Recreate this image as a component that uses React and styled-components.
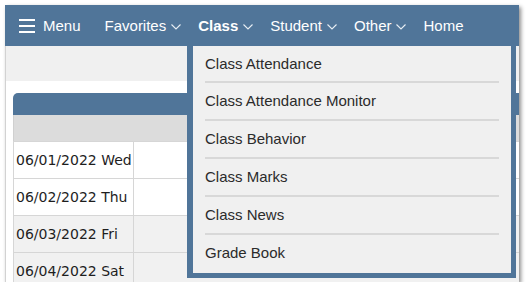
import React from "react";
import styled, { createGlobalStyle } from "styled-components";

const Global = createGlobalStyle`
  html, body { margin: 0; padding: 0; background: #ffffff; }
  body { font-family: "Liberation Sans", Arial, sans-serif; }
`;

const Frame = styled.div`
  position: relative;
  margin: 5px 0 0 5px;
  width: 514px;
  height: 277px;
  overflow: hidden;
  background: #ffffff;
  box-shadow: 2px 2px 4px rgba(0, 0, 0, 0.45);
  display: flex;
  flex-direction: column;
`;

const Nav = styled.nav`
  height: 41px;
  flex: none;
  background: #507599;
  display: flex;
  align-items: center;
  padding-left: 14px;
  gap: 17px;
  color: #ffffff;
  font-size: 15px;
`;

const MenuButton = styled.div`
  display: flex;
  align-items: center;
  gap: 8px;
  margin-right: 7px;
`;

const NavItem = styled.div`
  display: flex;
  align-items: center;
  gap: 5px;
  font-weight: ${(p) => (p.$active ? 700 : 400)};
`;

const Body = styled.div`
  flex: 1;
  border-left: 1px solid #d2d2d2;
  display: flex;
  flex-direction: column;
`;

const Band = styled.div`
  height: 35px;
  flex: none;
  background: #f0f0f0;
`;

const Work = styled.div`
  flex: 1;
  padding: 12px 0 0 7px;
`;

const Panel = styled.div`
  width: 520px;
  border-radius: 5px 5px 0 0;
  overflow: hidden;
`;

const PanelHead = styled.div`
  height: 22px;
  background: #507599;
`;

const HeadRow = styled.div`
  height: 26px;
  background: #dcdcdc;
  border-left: 1px solid #d0d0d0;
`;

const Row = styled.div`
  display: flex;
  height: 36px;
  border-top: 1px solid #d6d6d6;
  border-left: 1px solid #d6d6d6;
  background: ${(p) => (p.$shade ? "#f1f1f1" : "#ffffff")};
`;

const DateCell = styled.div`
  width: 117px;
  padding-left: 2px;
  border-right: 1px solid #d6d6d6;
  display: flex;
  align-items: center;
  font-family: "DejaVu Sans", Verdana, sans-serif;
  font-size: 14px;
  color: #1e1e1e;
  white-space: nowrap;
`;

const Dropdown = styled.ul`
  position: absolute;
  left: 182px;
  top: 41px;
  width: 318px;
  margin: 0;
  padding: 0 0 2px;
  list-style: none;
  background: #f0f0f0;
  border-style: solid;
  border-color: #507599;
  border-width: 0 5px 5px 6px;
`;

const DropItem = styled.li`
  height: 36px;
  display: flex;
  align-items: center;
  padding-left: 12px;
  padding-bottom: 1px;
  box-sizing: border-box;
  font-size: 15px;
  color: #2b2b2b;
  &:first-child {
    height: 35px;
  }
`;

const Sep = styled.li`
  height: 2px;
  margin: 0 12px;
  background: #d8d8d8;
`;

const Chevron = () => (
  <svg width="10" height="6" viewBox="0 0 10 6" style={{ marginTop: 2 }}>
    <path d="M0.5 0.5 L5 5 L9.5 0.5" fill="none" stroke="#e8eef4" strokeWidth="1.1" />
  </svg>
);

const Hamburger = () => (
  <svg width="16" height="14" viewBox="0 0 16 14">
    <rect x="0" y="0" width="16" height="2" fill="#ffffff" />
    <rect x="0" y="6" width="16" height="2" fill="#ffffff" />
    <rect x="0" y="12" width="16" height="2" fill="#ffffff" />
  </svg>
);

const rows = [
  { d: "06/01/2022 Wed", shade: false },
  { d: "06/02/2022 Thu", shade: false },
  { d: "06/03/2022 Fri", shade: true },
  { d: "06/04/2022 Sat", shade: true },
];

const items = [
  "Class Attendance",
  "Class Attendance Monitor",
  "Class Behavior",
  "Class Marks",
  "Class News",
  "Grade Book",
];

export default function App() {
  return (
    <>
      <Global />
      <Frame>
        <Nav>
          <MenuButton>
            <Hamburger />
            <span>Menu</span>
          </MenuButton>
          <NavItem>
            Favorites <Chevron />
          </NavItem>
          <NavItem $active>
            Class <Chevron />
          </NavItem>
          <NavItem>
            Student <Chevron />
          </NavItem>
          <NavItem>
            Other <Chevron />
          </NavItem>
          <NavItem>Home</NavItem>
        </Nav>
        <Body>
          <Band />
          <Work>
            <Panel>
              <PanelHead />
              <HeadRow />
              {rows.map((r) => (
                <Row key={r.d} $shade={r.shade}>
                  <DateCell>{r.d}</DateCell>
                </Row>
              ))}
            </Panel>
          </Work>
        </Body>
        <Dropdown>
          {items.map((t, i) => (
            <React.Fragment key={t}>
              {i > 0 && <Sep />}
              <DropItem>{t}</DropItem>
            </React.Fragment>
          ))}
        </Dropdown>
      </Frame>
    </>
  );
}
